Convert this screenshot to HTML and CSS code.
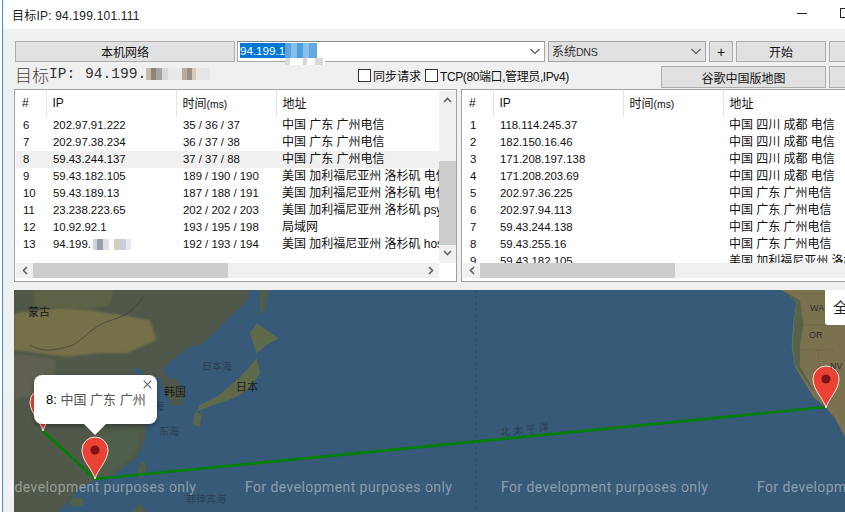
FILE: index.html
```html
<!DOCTYPE html>
<html lang="zh">
<head>
<meta charset="utf-8">
<title>目标IP</title>
<link rel="stylesheet" href="styles.css">
</head>
<body>
<div class="window">
  <header class="titlebar">
    <span class="title">目标IP: 94.199.101.111</span>
    <span class="win-min"></span>
    <span class="win-max"></span>
  </header>
  <main class="content">
    <div class="row-one">
      <button class="btn btn-net">本机网络</button>
      <div class="combo combo-ip">
        <span class="selected">94.199.1</span><span class="mosaic mosaic-blue"></span>
        <svg class="chev" width="12" height="7" viewBox="0 0 12 7"><path d="M1.5 1 6 5.5 10.5 1" fill="none" stroke="#555" stroke-width="1.1"/></svg>
      </div>
      <div class="combo combo-dns">
        <span>系统<span class="dns">DNS</span></span>
        <svg class="chev" width="12" height="7" viewBox="0 0 12 7"><path d="M1.5 1 6 5.5 10.5 1" fill="none" stroke="#555" stroke-width="1.1"/></svg>
      </div>
      <button class="btn btn-plus">+</button>
      <button class="btn btn-start">开始</button>
      <button class="btn btn-end"></button>
    </div>
    <div class="row-two">
      <div class="big-title"><span class="big-cjk">目标</span><span>IP: </span><span class="big-ip">94.199.</span><span class="mosaic mosaic-title"></span></div>
      <label class="check check-sync"><span class="box"></span>同步请求</label>
      <label class="check check-tcp"><span class="box"></span><span class="tcp-text">TCP(80端口,管理员,IPv4)</span></label>
      <button class="btn btn-map">谷歌中国版地图</button>
      <button class="btn btn-end"></button>
    </div>
    <div class="panes">
      <section class="pane pane-left">
        <div class="list">
          <table>
            <colgroup><col class="c1"><col class="c2"><col class="c3"><col class="c4"></colgroup>
            <thead><tr><th>#</th><th>IP</th><th>时间<span class="ms">(ms)</span></th><th>地址</th></tr></thead>
            <tbody>
              <tr><td>6</td><td>202.97.91.222</td><td>35 / 36 / 37</td><td>中国 广东 广州电信</td></tr>
              <tr><td>7</td><td>202.97.38.234</td><td>36 / 37 / 38</td><td>中国 广东 广州电信</td></tr>
              <tr class="hl"><td>8</td><td>59.43.244.137</td><td>37 / 37 / 88</td><td>中国 广东 广州电信</td></tr>
              <tr><td>9</td><td>59.43.182.105</td><td>189 / 190 / 190</td><td>美国 加利福尼亚州 洛杉矶 电信</td></tr>
              <tr><td>10</td><td>59.43.189.13</td><td>187 / 188 / 191</td><td>美国 加利福尼亚州 洛杉矶 电信</td></tr>
              <tr><td>11</td><td>23.238.223.65</td><td>202 / 202 / 203</td><td>美国 加利福尼亚州 洛杉矶 psychz.net</td></tr>
              <tr><td>12</td><td>10.92.92.1</td><td>193 / 195 / 198</td><td>局域网</td></tr>
              <tr><td>13</td><td>94.199.<span class="mosaic mosaic-row"></span></td><td>192 / 193 / 194</td><td>美国 加利福尼亚州 洛杉矶 hostspace</td></tr>
            </tbody>
          </table>
        </div>
        <div class="vbar">
          <svg width="9" height="6" viewBox="0 0 9 6"><path d="M1 5 4.5 1.5 8 5" fill="none" stroke="#606060" stroke-width="1.6"/></svg>
          <div class="vthumb"></div>
          <svg width="9" height="6" viewBox="0 0 9 6"><path d="M1 1 4.5 4.5 8 1" fill="none" stroke="#606060" stroke-width="1.6"/></svg>
        </div>
        <div class="hbar">
          <svg width="6" height="9" viewBox="0 0 6 9"><path d="M5 1 1.5 4.5 5 8" fill="none" stroke="#606060" stroke-width="1.6"/></svg>
          <div class="hthumb"></div>
          <svg class="harrow-end" width="6" height="9" viewBox="0 0 6 9"><path d="M1 1 4.5 4.5 1 8" fill="none" stroke="#606060" stroke-width="1.6"/></svg>
        </div>
      </section>
      <section class="pane pane-right">
        <div class="list">
          <table>
            <colgroup><col class="c1"><col class="c2"><col class="c3"><col class="c4"></colgroup>
            <thead><tr><th>#</th><th>IP</th><th>时间<span class="ms">(ms)</span></th><th>地址</th></tr></thead>
            <tbody>
              <tr><td>1</td><td>118.114.245.37</td><td></td><td>中国 四川 成都 电信</td></tr>
              <tr><td>2</td><td>182.150.16.46</td><td></td><td>中国 四川 成都 电信</td></tr>
              <tr><td>3</td><td>171.208.197.138</td><td></td><td>中国 四川 成都 电信</td></tr>
              <tr><td>4</td><td>171.208.203.69</td><td></td><td>中国 四川 成都 电信</td></tr>
              <tr><td>5</td><td>202.97.36.225</td><td></td><td>中国 广东 广州电信</td></tr>
              <tr><td>6</td><td>202.97.94.113</td><td></td><td>中国 广东 广州电信</td></tr>
              <tr><td>7</td><td>59.43.244.138</td><td></td><td>中国 广东 广州电信</td></tr>
              <tr><td>8</td><td>59.43.255.16</td><td></td><td>中国 广东 广州电信</td></tr>
              <tr><td>9</td><td>59.43.182.105</td><td></td><td>美国 加利福尼亚州 洛杉矶 电信</td></tr>
            </tbody>
          </table>
        </div>
        <div class="hbar">
          <svg width="6" height="9" viewBox="0 0 6 9"><path d="M5 1 1.5 4.5 5 8" fill="none" stroke="#606060" stroke-width="1.6"/></svg>
          <div class="hthumb"></div>
        </div>
      </section>
    </div>
    <div class="map">
      <svg class="map-art" width="831" height="222" viewBox="0 0 831 222">
        <defs>
          <filter id="soft" x="-5%" y="-5%" width="110%" height="110%"><feGaussianBlur stdDeviation="1.6"/></filter>
          <filter id="softer" x="-5%" y="-5%" width="110%" height="110%"><feGaussianBlur stdDeviation="3"/></filter>
          <g id="pin">
            <path d="M0 0C-2 -9 -13 -18 -13 -29A13 13 0 1 1 13 -29C13 -18 2 -9 0 0Z" fill="#ea4335" stroke="#f6e5e0" stroke-width="1"/>
            <circle cx="0" cy="-29" r="4.6" fill="#7f1414"/>
          </g>
        </defs>
        <line x1="462" y1="0" x2="462" y2="222" stroke="#2c4a63" stroke-width="1" stroke-dasharray="3 3"/>
        <g transform="translate(-14 0) scale(.33333)">
          <path d="M0 0L750 0 735 40 700 70 650 120 610 160 560 175 510 215 490 240 500 262 530 268 555 310 545 345 515 345 495 300 478 262 440 268 420 235 395 240 432 270 442 320 440 400 435 450 410 500 350 550 290 568 240 590 200 640 170 666 0 666Z" fill="#50594a" filter="url(#soft)"/>
          <path d="M42 70L200 50 330 70 450 90 470 150 380 190 300 190 200 200 120 190 42 180Z" fill="#75704a" filter="url(#softer)"/>
          <path d="M100 0L340 0 330 45 250 60 100 50Z" fill="#5d6247" filter="url(#softer)"/>
          <path d="M42 190L170 210 150 300 42 330Z" fill="#5e6050" filter="url(#softer)"/>
          <path d="M300 430L420 420 410 490 340 545 290 560 260 500Z" fill="#4f5f4b" filter="url(#softer)"/>
          <path d="M770 100L835 145 800 165 770 190 750 130Z" fill="#5f6a4c" filter="url(#soft)"/>
          <path d="M770 205L780 250 745 300 700 325 640 345 590 365 600 345 650 320 700 280 740 240Z" fill="#5f6a4c" filter="url(#soft)"/>
          <path d="M585 362L605 375 600 410 580 405Z" fill="#5c664b" filter="url(#soft)"/>
          <path d="M780 0L805 0 795 60 780 75Z" fill="#515c49" filter="url(#soft)"/>
          <ellipse cx="230" cy="636" rx="22" ry="14" fill="#52604a" filter="url(#soft)"/>
          <ellipse cx="426" cy="540" rx="11" ry="25" transform="rotate(15 426 540)" fill="#52604a" filter="url(#soft)"/>
          <path d="M395 666L420 640 440 666Z" fill="#4f5b48" filter="url(#soft)"/>
          <path d="M90 165C130 190 170 180 220 165 240 155 280 110 320 95 370 80 395 70 430 20" fill="none" stroke="#39392f" stroke-width="2"/>
        </g>
        <g transform="translate(586 0) scale(.33333)">
          <path d="M545 0L590 30 580 100 575 170 585 230 640 320 680 355 705 385 735 440 760 450 760 0Z" fill="#7a7250" filter="url(#soft)"/>
          <path d="M555 5L600 30 610 100 600 170 600 230 650 315 630 290 585 225 578 170 582 100 590 40Z" fill="#566448" filter="url(#soft)"/>
          <path d="M600 10L700 10M590 105H700M600 180H700M655 180V250" fill="none" stroke="#4f4b3c" stroke-width="1.5" stroke-dasharray="4 4"/>
        </g>
        <path d="M29 141L81 189 812 117" fill="none" stroke="#008000" stroke-width="2.6"/>
        <use href="#pin" transform="translate(29 141)"/>
        <use href="#pin" transform="translate(81 189)"/>
        <use href="#pin" transform="translate(812 118)"/>
      </svg>
      <span class="label label-dark label-mongolia">蒙古</span>
      <span class="label label-dark label-korea">韩国</span>
      <span class="label label-dark label-japan">日本</span>
      <span class="label label-faint label-jsea">日本海</span>
      <span class="label label-faint label-ysea">海</span>
      <span class="label label-faint label-esea">东海</span>
      <span class="label label-faint label-phil">菲律宾海</span>
      <span class="label label-faint label-npac">北太平洋</span>
      <span class="label label-state label-wa">WA</span>
      <span class="label label-state label-or">OR</span>
      <span class="label label-state label-nv">NV</span>
      <div class="devs">
        <span class="dev">For development purposes only</span>
        <span class="dev">For development purposes only</span>
        <span class="dev">For development purposes only</span>
        <span class="dev">For development purposes only</span>
      </div>
      <div class="popup">
        <span class="popup-text"><b>8:</b> 中国 广东 广州</span>
        <svg class="popup-close" width="9" height="9" viewBox="0 0 9 9"><path d="M.7 .7 8.3 8.3M8.3 .7 .7 8.3" stroke="#666" stroke-width="1.2"/></svg>
      </div>
      <div class="map-btn">全</div>
    </div>
  </main>
</div>
</body>
</html>
```
FILE: styles.css
```css
* { box-sizing: border-box; }
html, body { margin: 0; height: 100%; overflow: hidden; background: #fff; }
body { padding-left: 2px; font: 12px "Liberation Sans", "Noto Sans CJK SC", sans-serif; color: #111; }
.window { width: 843px; height: 512px; border-left: 1px solid #2f96e8; display: flex; flex-direction: column; overflow: hidden; }
.titlebar { height: 29px; flex: none; background: #fff; display: flex; align-items: center; padding-left: 9px; position: relative; }
.title { font-size: 12px; color: #222; letter-spacing: .2px; }
.win-min { position: absolute; left: 794px; top: 13px; width: 10px; height: 1px; background: #222; }
.win-max { position: absolute; left: 837px; top: 8px; width: 10px; height: 10px; border: 1px solid #222; }
.content { flex: 1; min-height: 0; background: #f0f0f0; padding: 12px 0 0 11px; display: flex; flex-direction: column; }
.btn { font: inherit; color: #111; height: 21px; background: #e1e1e1; border: 1px solid #adadad; padding: 0; flex: none; }
.row-one { display: flex; height: 21px; flex: none; padding-left: 1px; }
.btn-net { width: 220px; margin-right: 2px; font-size: 12px; }
.combo { height: 21px; border: 1px solid #a5a5a5; display: flex; align-items: center; position: relative; flex: none; }
.combo-ip { width: 308px; background: #fff; padding-left: 2px; margin-right: 3px; align-items: flex-start; border-top-color: #8a8a8a; }
.combo-dns { width: 158px; background: #e1e1e1; padding: 0 0 2px 3px; margin-right: 3px; color: #333; }
.dns { font-size: 10.6px; letter-spacing: -.3px; }
.selected { background: #0078d7; color: #fff; height: 15px; line-height: 15px; font-size: 11.6px; margin-top: 1px; }
.chev { position: absolute; right: 3px; top: 6px; }
.btn-plus { width: 24px; margin-right: 3px; font-size: 14px; }
.btn-start { width: 90px; margin-right: 3px; }
.btn-end { width: 40px; }
.row-two { display: flex; height: 27px; flex: none; align-items: center; padding-left: 2px; position: relative; }
.big-title { width: 342px; flex: none; font: 14.6px "Liberation Mono", "Noto Sans CJK SC", monospace; color: #333; display: flex; align-items: center; white-space: pre; height: 27px; padding-bottom: 3px; margin-left: -1px; margin-right: 1px; }
.big-cjk { font: 300 17px "Noto Sans CJK SC", sans-serif; color: #4a4038; }
.big-ip { margin-left: 1px; }
.check { display: flex; align-items: center; gap: 1px; white-space: nowrap; flex: none; }
.box { width: 13px; height: 13px; border: 1px solid #333; background: #fff; flex: none; margin-right: 1px; }
.check-sync { width: 67px; }
.check-tcp { width: 236px; }
.tcp-text { letter-spacing: -.4px; }
.btn-map { width: 165px; height: 22px; margin-right: 3px; margin-top: 3px; }
.row-two .btn-end { height: 22px; margin-top: 3px; }
.mosaic { display: inline-block; flex: none; vertical-align: middle; }
.mosaic-blue { width: 40px; height: 22px; margin-top: 1px;
  background:
    linear-gradient(90deg, #5aa5e2 0 6px, #86bde9 6px 12px, #4f9ee0 12px 18px, #8bc0ea 18px 24px, #62a9e3 24px 32px, #fff 32px) 0 0 / 100% 15px no-repeat,
    linear-gradient(90deg, #dcdcdc 0 5px, #fff 5px 18px, #d6d6d6 18px 22px, #fff 22px 30px, #d9d9d9 30px 38px, #fff 38px) 0 15px / 100% 7px no-repeat; }
.mosaic-title { width: 64px; height: 22px;
  background:
    linear-gradient(90deg, #c9b8a8 0 5px, #8e8378 5px 10px, #a5a3a0 10px 16px, #d8d8d8 16px 22px, #e9e9e9 22px 36px, #bca99c 36px 41px, #9a8f88 41px 46px, #d8c9ba 46px 50px, #e6e6e6 50px) 0 5px / 100% 12px no-repeat; }
.mosaic-row { width: 44px; height: 11px;
  background: linear-gradient(90deg, #fff 0 2px, #cfd3ea 2px 6px, #9a9eaa 6px 12px, #dfe0e8 12px 18px, #fff 18px 23px, #d8cdbc 23px 29px, #c8cfdf 29px 35px, #e7e9f3 35px 40px, #fff 40px); }
.panes { display: flex; gap: 4px; height: 193px; flex: none; padding-top: 0; margin-bottom: 8px; }
.pane { height: 193px; flex: none; background: #fff; border: 1px solid #9ea3a8; display: grid; overflow: hidden; padding: 1px; background-clip: padding-box; }
.pane-left { width: 443px; grid-template-columns: 423px 17px; grid-template-rows: 172px 15px; }
.pane-right { width: 400px; grid-template-columns: 1fr; grid-template-rows: 172px 15px; }
.list { overflow: hidden; background: #fff; }
table { border-collapse: collapse; table-layout: fixed; width: 500px; }
.c1 { width: 30px; } .c2 { width: 130px; } .c3 { width: 100px; } .c4 { width: 240px; }
th { height: 26px; padding: 0 0 3px 6px; text-align: left; font-weight: 400; font-size: 12px; border-right: 1px solid #e5e5e5; white-space: nowrap; }
th:last-child { border-right: 0; }
.ms { font-size: 10.4px; }
td { height: 17px; padding: 0 0 0 7px; white-space: nowrap; overflow: hidden; font-size: 11.4px; line-height: 17px; letter-spacing: -.02px; }
td:last-child { font-size: 12px; padding-left: 6px; }
tr.hl td { background: #f0f0f0; }
.vbar { background: #f0f0f0; display: flex; flex-direction: column; align-items: center; padding-top: 6px; }
.vthumb { width: 17px; height: 84px; background: #cdcdcd; margin-top: 58px; margin-bottom: 5px; }
.hbar { background: #f0f0f0; display: flex; align-items: center; padding-left: 6px; grid-column: 1 / -1; }
.pane-left .hbar { grid-column: 1 / 2; width: 423px; }
.hthumb { width: 195px; height: 15px; background: #cdcdcd; margin-left: 5px; }
.harrow-end { margin-left: auto; margin-right: 5px; }
.map { position: relative; height: 222px; width: 831px; overflow: hidden; background: #375a78; flex: none; }
.map-art { position: absolute; left: 0; top: 0; }
.label { position: absolute; white-space: nowrap; line-height: 1; }
.label-dark { color: #1c1c1c; font-size: 11px; }
.label-faint { color: #2b3f52; font-size: 10px; }
.label-state { color: #2e2e2a; font-size: 9px; }
.label-mongolia { left: 14px; top: 17px; }
.label-korea { left: 150px; top: 97px; }
.label-japan { left: 222px; top: 92px; }
.label-jsea { left: 188px; top: 72px; }
.label-ysea { left: 140px; top: 112px; }
.label-esea { left: 145px; top: 137px; }
.label-phil { left: 172px; top: 205px; }
.label-npac { left: 486px; top: 135px; letter-spacing: 3px; transform: rotate(-6deg); }
.label-wa { left: 796px; top: 14px; }
.label-or { left: 795px; top: 41px; }
.label-nv { left: 816px; top: 72px; }
.devs { position: absolute; left: -25px; top: 189px; display: flex; white-space: nowrap; color: rgba(255,255,255,.42); font: 14px Roboto, "Liberation Sans", sans-serif; letter-spacing: .42px; }
.dev { width: 256px; flex: none; }
.popup { position: absolute; left: 20px; top: 85px; width: 123px; height: 49px; background: #fff; border-radius: 8px; box-shadow: 0 2px 4px rgba(0,0,0,.35); display: flex; align-items: center; padding: 0 0 3px 12px; font-size: 13px; color: #555; }
.popup::after { content: ""; position: absolute; left: 50px; top: 49px; border: 11px solid transparent; border-top-color: #fff; border-bottom: 0; }
.popup b { font-weight: 400; color: #000; }
.popup-text { white-space: nowrap; }
.popup-close { position: absolute; right: 5px; top: 5px; }
.map-btn { position: absolute; left: 811px; top: 0; width: 40px; height: 35px; background: #fff; border-radius: 0 0 0 3px; font-size: 15px; color: #222; padding: 9px 0 0 8px; line-height: 18px; }
```
